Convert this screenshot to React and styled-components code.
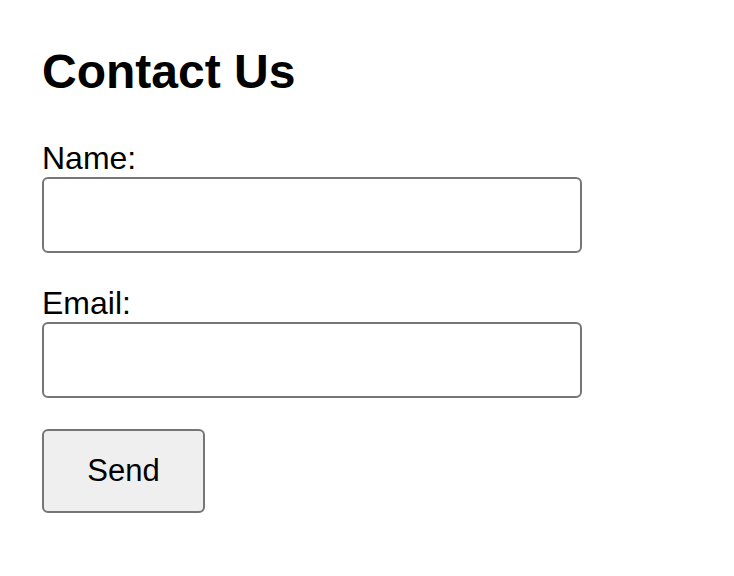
import React from "react";
import styled, { createGlobalStyle } from "styled-components";

const GlobalStyle = createGlobalStyle`
  body {
    margin: 0;
    background: #ffffff;
    font-family: "Liberation Sans", Arial, Helvetica, sans-serif;
    color: #000000;
  }
`;

const Page = styled.div`
  padding: 44px 42px;
`;

const Title = styled.h1`
  margin: 0 0 41px;
  font-size: 48px;
  font-weight: 700;
  line-height: normal;
`;

const Form = styled.form`
  display: flex;
  flex-direction: column;
  align-items: flex-start;
`;

const Field = styled.div`
  display: flex;
  flex-direction: column;
  margin-bottom: ${(p) => p.$gap}px;
`;

const Label = styled.label`
  font-size: 32px;
  line-height: normal;
`;

const Input = styled.input`
  box-sizing: border-box;
  width: 540px;
  height: 76px;
  margin: 0;
  padding: 0 12px;
  border: 2px solid #767676;
  border-radius: 6px;
  font-family: inherit;
  font-size: 32px;
  background: #ffffff;
  outline: none;
`;

const Button = styled.button`
  box-sizing: border-box;
  width: 163px;
  height: 84px;
  padding: 0;
  border: 2px solid #767676;
  border-radius: 6px;
  background: #efefef;
  font-family: inherit;
  font-size: 31px;
  color: #000000;
`;

const App = () => {
  return (
    <Page>
      <GlobalStyle />
      <Title>Contact Us</Title>
      <Form onSubmit={(e) => e.preventDefault()}>
        <Field $gap={32}>
          <Label htmlFor="name">Name:</Label>
          <Input id="name" type="text" />
        </Field>
        <Field $gap={31}>
          <Label htmlFor="email">Email:</Label>
          <Input id="email" type="email" />
        </Field>
        <Button type="submit">Send</Button>
      </Form>
    </Page>
  );
};

export default App;
